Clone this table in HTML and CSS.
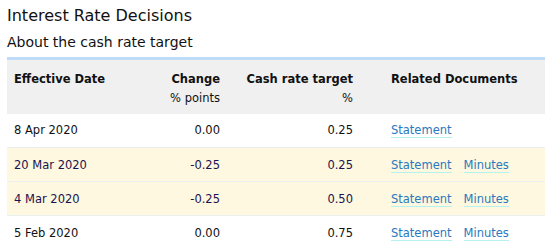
FILE: index.html
```html
<!DOCTYPE html>
<html>
<head>
<meta charset="utf-8">
<link rel="stylesheet" href="styles.css">
</head>
<body>
<div class="page">
  <h1 class="title">Interest Rate Decisions</h1>
  <h2 class="subtitle">About the cash rate target</h2>
  <table class="rates">
    <colgroup>
      <col class="w-date">
      <col class="w-change">
      <col class="w-rate">
      <col class="w-docs">
    </colgroup>
    <thead>
      <tr>
        <th class="c-date">Effective Date</th>
        <th class="c-num">Change<span class="unit">% points</span></th>
        <th class="c-num">Cash rate target<span class="unit">%</span></th>
        <th class="c-docs">Related Documents</th>
      </tr>
    </thead>
    <tbody>
      <tr>
        <td class="c-date">8 Apr 2020</td>
        <td class="c-num">0.00</td>
        <td class="c-num">0.25</td>
        <td class="c-docs"><a href="#">Statement</a></td>
      </tr>
      <tr class="hl">
        <td class="c-date">20 Mar 2020</td>
        <td class="c-num">-0.25</td>
        <td class="c-num">0.25</td>
        <td class="c-docs"><a href="#">Statement</a><a href="#">Minutes</a></td>
      </tr>
      <tr class="hl">
        <td class="c-date">4 Mar 2020</td>
        <td class="c-num">-0.25</td>
        <td class="c-num">0.50</td>
        <td class="c-docs"><a href="#">Statement</a><a href="#">Minutes</a></td>
      </tr>
      <tr>
        <td class="c-date">5 Feb 2020</td>
        <td class="c-num">0.00</td>
        <td class="c-num">0.75</td>
        <td class="c-docs"><a href="#">Statement</a><a href="#">Minutes</a></td>
      </tr>
    </tbody>
  </table>
</div>
</body>
</html>
```
FILE: styles.css
```css
html, body {
  margin: 0;
  padding: 0;
  background: #fff;
}
body {
  font-family: "DejaVu Sans", Verdana, sans-serif;
  color: #111;
}
.page {
  padding: 5px 6px 0 7px;
}
.title {
  margin: 0;
  font-size: 16px;
  font-weight: normal;
  line-height: 22px;
}
.subtitle {
  margin: 4px 0 0;
  font-size: 14px;
  font-weight: normal;
  line-height: 22px;
}
.rates {
  width: 538px;
  table-layout: fixed;
  margin-top: 4px;
  border-collapse: collapse;
  border-top: 3px solid #bfdcf9;
  font-size: 11.5px;
}
.w-date { width: 120px; }
.w-change { width: 100px; }
.w-rate { width: 133px; }
.w-docs { width: 185px; }
.rates th {
  background: #f0f0f0;
  font-weight: bold;
  vertical-align: top;
  padding: 10px 7px 0;
  height: 55px;
  box-sizing: border-box;
  line-height: 18px;
  text-align: left;
  white-space: nowrap;
}
.rates th .unit {
  display: block;
  font-weight: normal;
  line-height: 20px;
}
.rates td {
  padding: 0 7px;
  height: 34px;
  box-sizing: border-box;
  line-height: 18px;
  border-bottom: 1px solid #eceff2;
  white-space: nowrap;
}
.rates tbody tr:last-child td {
  border-bottom: none;
}
.rates .c-num {
  text-align: right;
}
.rates .c-docs {
  padding-left: 31px;
}
.hl td {
  background: #fdf8df;
  color: #1c1150;
}
.rates a {
  color: #2a78c0;
  text-decoration: none;
  border-bottom: 1px solid #b4f2f0;
  margin-right: 12px;
}
```
